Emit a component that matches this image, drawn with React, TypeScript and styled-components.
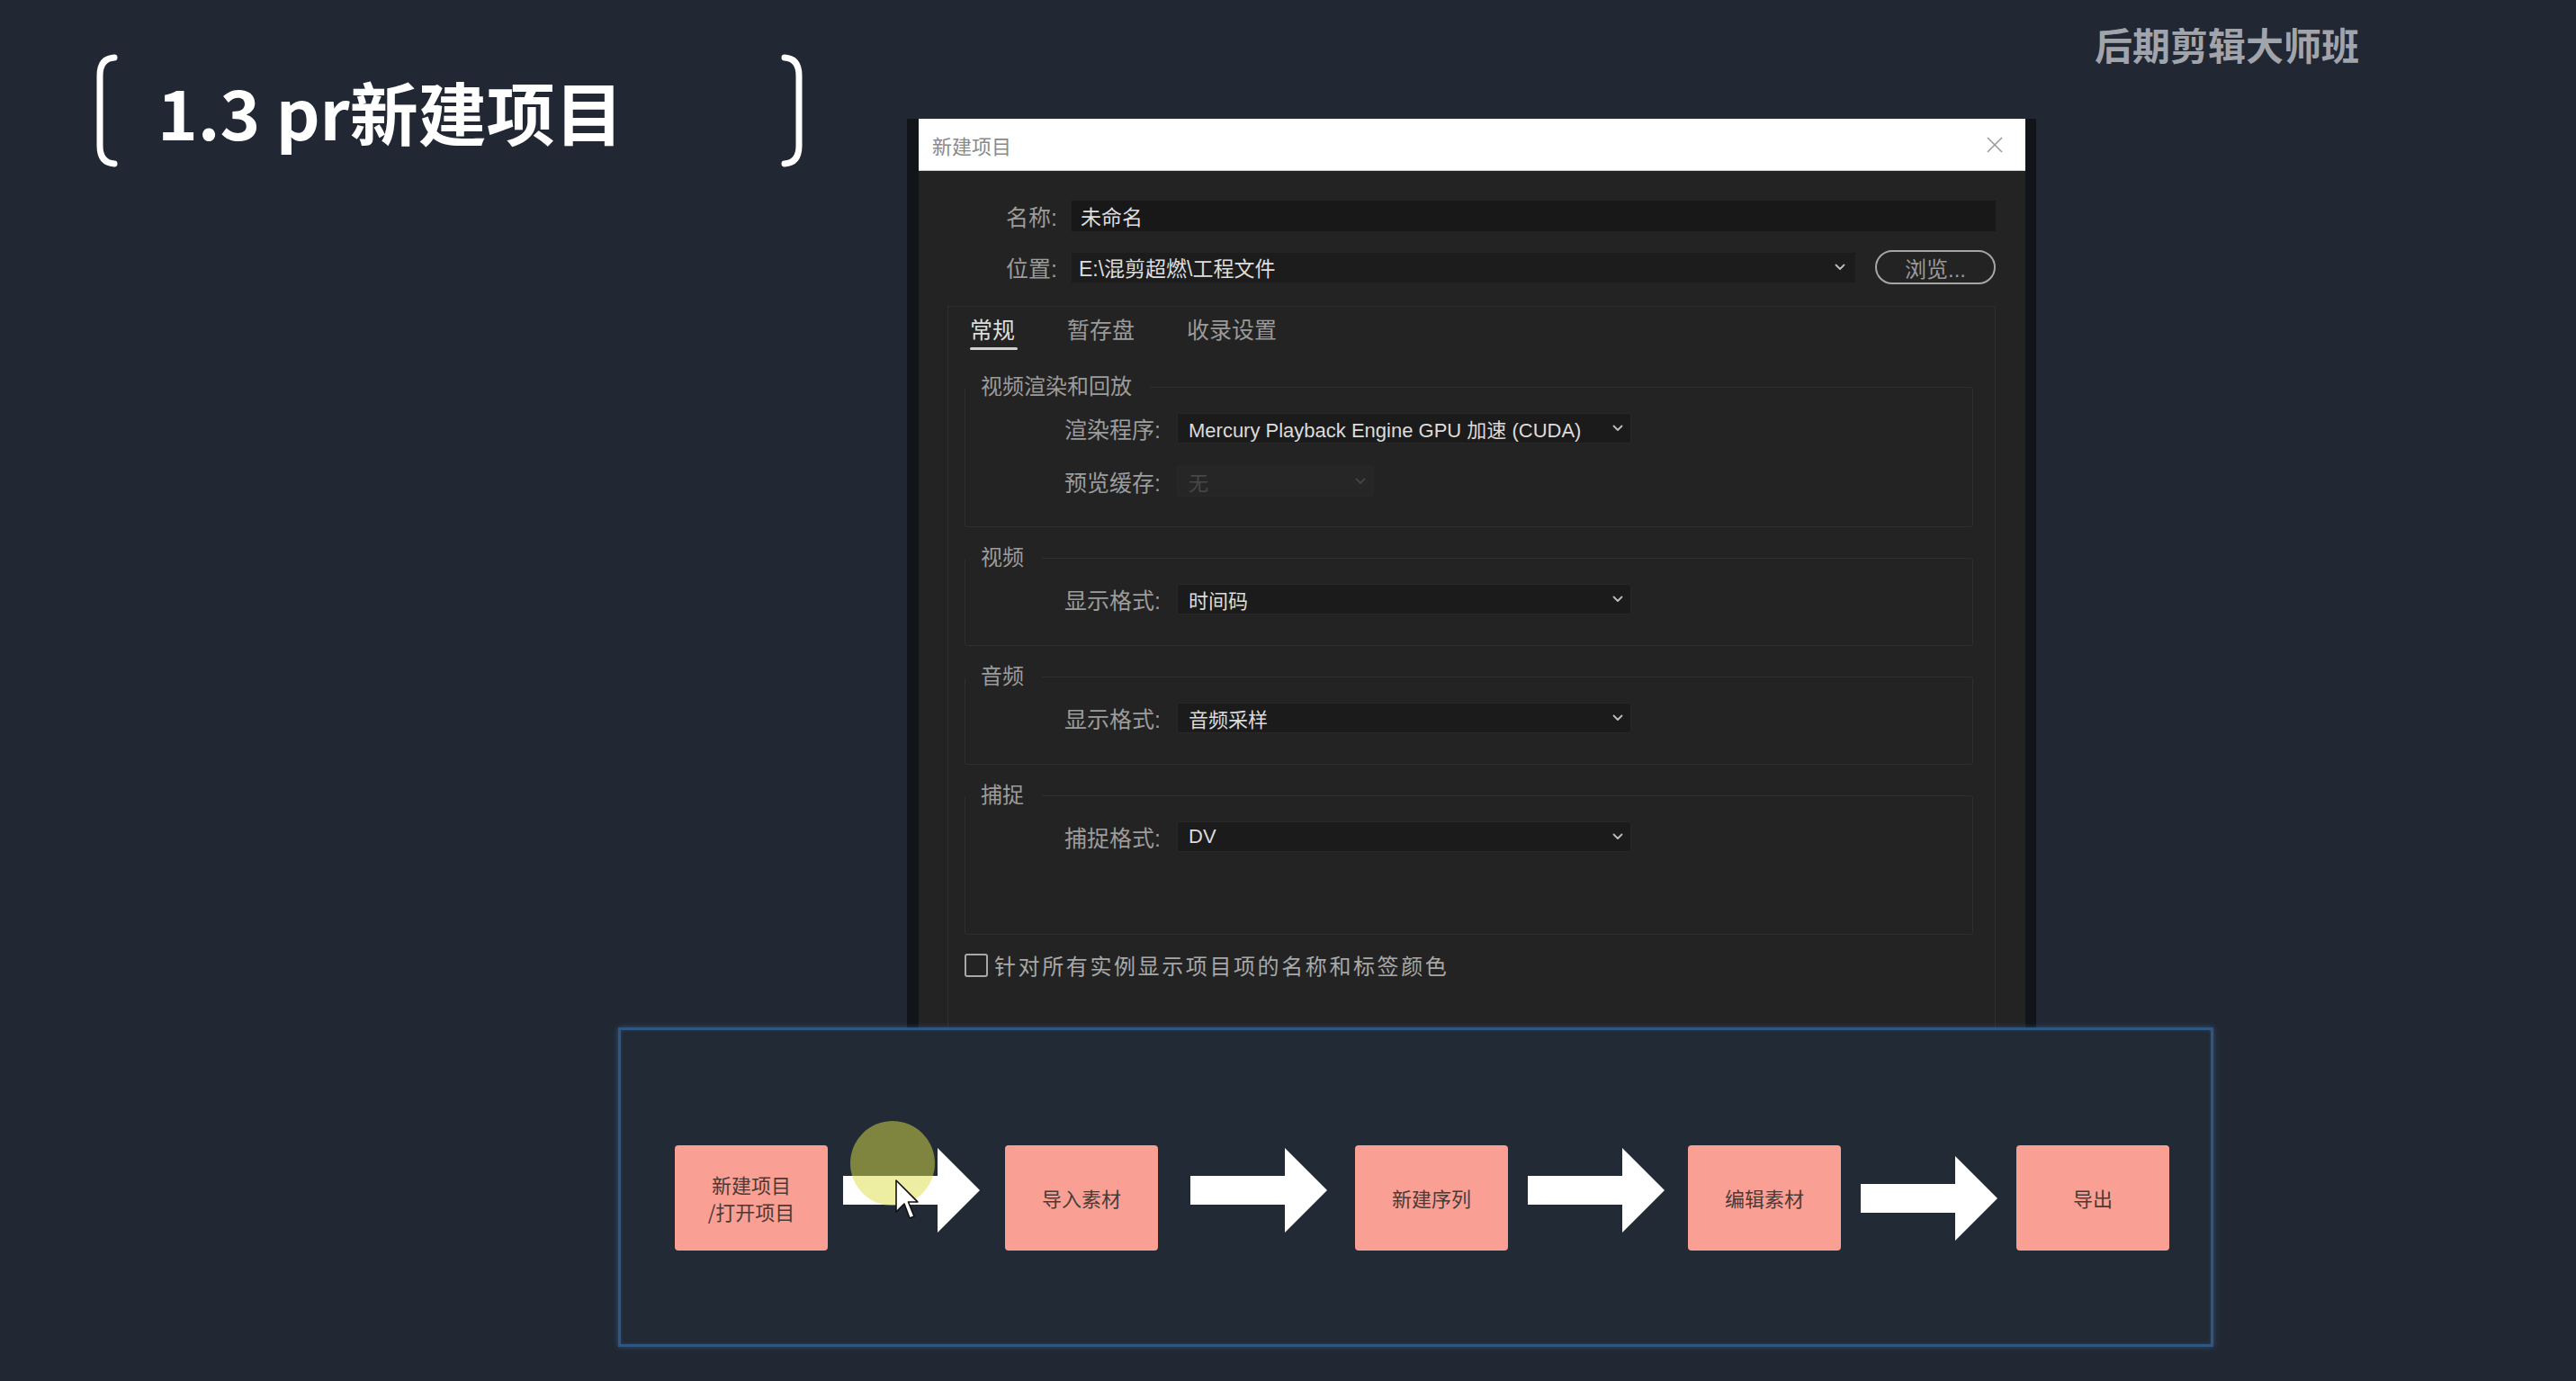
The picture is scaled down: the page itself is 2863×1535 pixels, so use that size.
import React from 'react';
import styled, { createGlobalStyle } from 'styled-components';

const GlobalStyle = createGlobalStyle`
  html, body { margin: 0; padding: 0; background: #212833; }
  body { font-family: "Liberation Sans", "Noto Sans CJK SC", sans-serif; }
  * { box-sizing: border-box; }
`;

const Page = styled.div`
  width: 2863px;
  height: 1535px;
  overflow: hidden;
  background: #212833;
  display: grid;
  grid-template-columns: 687px 321px 1255px 197px 1fr;
  grid-template-rows: 132px 1010px 355px 1fr;
`;

/* ---------- Slide title ---------- */
const TitleBlock = styled.div`
  grid-column: 1 / 3;
  grid-row: 1 / 3;
  align-self: start;
  justify-self: start;
  margin: 60px 0 0 106px;
  width: 787px;
  height: 126px;
  display: grid;
  grid-template-columns: 25px 1fr 25px;
  align-items: center;
`;

const TitleText = styled.h1`
  margin: 0;
  padding-left: 44px;
  font-family: "Noto Sans CJK SC", sans-serif;
  font-weight: 700;
  font-size: 76px;
  line-height: 1;
  color: #ffffff;
  white-space: nowrap;
`;

const BracketSvg = styled.svg`
  display: block;
  width: 25px;
  height: 126px;
`;

const Bracket = ({ flip }: { flip?: boolean }) => (
  <BracketSvg viewBox="0 0 25 126" style={flip ? { transform: 'scaleX(-1)' } : undefined}>
    <path
      d="M21 4 Q5 5 5 24 L5 102 Q5 121 21 122"
      fill="none"
      stroke="#ffffff"
      strokeWidth="7"
      strokeLinecap="round"
    />
  </BracketSvg>
);

const Watermark = styled.div`
  grid-column: 3 / 6;
  grid-row: 1;
  justify-self: end;
  align-self: start;
  margin: 28px 241px 0 0;
  font-family: "Noto Sans CJK SC", sans-serif;
  font-weight: 700;
  font-size: 42px;
  line-height: 1;
  color: #a1a5ab;
  white-space: nowrap;
`;

/* ---------- Dialog ---------- */
const Dialog = styled.section`
  grid-column: 3;
  grid-row: 2;
  display: flex;
  flex-direction: column;
  background: #111418;
  padding: 0 12px 0 13px;
  overflow: hidden;
`;

const TitleBar = styled.header`
  flex: none;
  height: 58px;
  background: #ffffff;
  border-bottom: 1px solid #cfcfcf;
  display: flex;
  align-items: center;
  justify-content: space-between;
  padding: 0 24px 0 15px;
`;

const DialogTitle = styled.span`
  font-family: "Noto Sans CJK SC", sans-serif;
  font-size: 22px;
  color: #8a8a8a;
`;

const CloseSvg = styled.svg`
  width: 20px;
  height: 20px;
  display: block;
`;

const DialogBody = styled.div`
  flex: 1;
  background: #232323;
  display: flex;
  flex-direction: column;
  min-height: 0;
`;

const TopForm = styled.div`
  display: grid;
  grid-template-columns: 154px 1fr;
  column-gap: 16px;
  row-gap: 20px;
  align-items: center;
  padding: 32px 33px 0 0;
`;

const FormLabel = styled.label`
  text-align: right;
  font-size: 25px;
  color: #9c9c9c;
  white-space: nowrap;
`;

const NameInput = styled.div`
  height: 34px;
  background: #181818;
  display: flex;
  align-items: center;
  padding: 0 10px;
  font-size: 23px;
  color: #dedede;
`;

const LocationRow = styled.div`
  display: flex;
  align-items: center;
  gap: 22px;
`;

const LocationSelect = styled.div`
  flex: 1;
  height: 33px;
  background: #1c1c1c;
  display: flex;
  align-items: center;
  justify-content: space-between;
  padding: 0 11px 0 8px;
  font-size: 23px;
  color: #dedede;
`;

const BrowseButton = styled.button`
  width: 134px;
  height: 38px;
  border: 2px solid #a6a6a6;
  border-radius: 19px;
  background: transparent;
  font-family: "Liberation Sans", "Noto Sans CJK SC", sans-serif;
  font-size: 24px;
  color: #9a9a9a;
  padding: 0;
`;

const TabPanel = styled.div`
  flex: 1;
  margin: 24px 33px 0 32px;
  border: 1px solid #2e2e2e;
  border-bottom: none;
  padding: 0 24px 0 18px;
`;

const TabBar = styled.div`
  display: flex;
  gap: 58px;
  padding: 11px 0 7px 6px;
`;

const Tab = styled.div<{ $active?: boolean }>`
  display: inline-flex;
  flex-direction: column;
  align-items: stretch;
  font-size: 25px;
  line-height: 30px;
  color: ${(p) => (p.$active ? '#dcdcdc' : '#9a9a9a')};
  &::after {
    content: '';
    display: block;
    height: 3px;
    margin: 4px -3px 0 0;
    border-radius: 2px;
    background: ${(p) => (p.$active ? '#d0d0d0' : 'transparent')};
  }
`;

const Group = styled.fieldset<{ $pb?: number; $mt?: number }>`
  margin: ${(p) => p.$mt ?? 19}px 0 0 0;
  border: 1px solid #2f2f2f;
  border-radius: 3px;
  padding: 13px 0 ${(p) => p.$pb ?? 33}px 0;
  min-width: 0;
`;

const Legend = styled.legend`
  padding: 0 20px 0 17px;
  font-size: 24px;
  line-height: 30px;
  color: #9c9c9c;
`;

const Rows = styled.div`
  display: flex;
  flex-direction: column;
  gap: 23px;
`;

const FieldRow = styled.div`
  display: grid;
  grid-template-columns: 217px auto;
  column-gap: 18px;
  align-items: center;
  justify-content: start;
`;

const Select = styled.div<{ $w: number; $disabled?: boolean }>`
  width: ${(p) => p.$w}px;
  height: 34px;
  background: ${(p) => (p.$disabled ? '#262626' : '#1b1b1b')};
  border: 1px solid #282828;
  border-radius: 2px;
  display: flex;
  align-items: center;
  justify-content: space-between;
  padding: 0 8px 0 12px;
  font-size: 22px;
  color: ${(p) => (p.$disabled ? '#474747' : '#dcdcdc')};
  white-space: nowrap;
`;

const ChevronSvg = styled.svg`
  width: 12px;
  height: 8px;
  display: block;
  flex: none;
`;

const Chevron = ({ color = '#bdbdbd' }: { color?: string }) => (
  <ChevronSvg viewBox="0 0 12 8">
    <polyline points="1.5,1.5 6,6 10.5,1.5" fill="none" stroke={color} strokeWidth="1.8" strokeLinecap="round" strokeLinejoin="round" />
  </ChevronSvg>
);

const CheckRow = styled.div`
  margin-top: 16px;
  display: flex;
  align-items: center;
  gap: 7px;
`;

const CheckBox = styled.span`
  width: 26px;
  height: 26px;
  border: 2px solid #a8a8a8;
  border-radius: 3px;
  flex: none;
`;

const CheckText = styled.span`
  font-size: 24px;
  letter-spacing: 2.6px;
  color: #a8a8a8;
  white-space: nowrap;
`;

/* ---------- Flow diagram ---------- */
const FlowPanel = styled.section`
  grid-column: 2 / 5;
  grid-row: 3;
  border: 3px solid #2e5681;
  box-shadow: 0 0 6px rgba(70, 130, 200, 0.45), inset 0 0 4px rgba(70, 130, 200, 0.25);
  background: #212a35;
  padding: 128px 0 0 60px;
`;

const FlowRow = styled.div`
  display: flex;
  align-items: center;
  height: 117px;
`;

const StepBox = styled.div`
  flex: none;
  width: 170px;
  height: 117px;
  background: #fa9f94;
  border-radius: 4px;
  display: flex;
  align-items: center;
  justify-content: center;
  text-align: center;
  font-family: "Noto Sans CJK SC", sans-serif;
  font-size: 22px;
  line-height: 1.35;
  color: #4c3a37;
`;

const ArrowWrap = styled.div<{ $ml: number; $mr: number; $lift: number }>`
  position: relative;
  flex: none;
  width: 152px;
  height: 94px;
  margin: 0 ${(p) => p.$mr}px ${(p) => p.$lift}px ${(p) => p.$ml}px;
`;

const ArrowSvg = styled.svg`
  display: block;
  width: 152px;
  height: 94px;
`;

const Highlight = styled.div`
  position: absolute;
  left: 8px;
  top: -30px;
  width: 94px;
  height: 94px;
  border-radius: 50%;
  background: rgba(222, 222, 72, 0.5);
`;

const CursorSvg = styled.svg`
  position: absolute;
  left: 58px;
  top: 35px;
  width: 27px;
  height: 45px;
`;

const Arrow = ({ ml, mr, lift, cursor }: { ml: number; mr: number; lift: number; cursor?: boolean }) => (
  <ArrowWrap $ml={ml} $mr={mr} $lift={lift}>
    <ArrowSvg viewBox="0 0 152 94">
      <polygon points="0,31 105,31 105,0 152,47 105,94 105,63 0,63" fill="#ffffff" />
    </ArrowSvg>
    {cursor && (
      <>
        <Highlight />
        <CursorSvg viewBox="-1 -1 27 45">
          <polygon
            points="0,0 0,35 9,26 15,42 20,40 13.5,24 24,24"
            fill="#ffffff"
            stroke="#111111"
            strokeWidth="1.6"
            strokeLinejoin="round"
          />
        </CursorSvg>
      </>
    )}
  </ArrowWrap>
);

export default function App() {
  return (
    <>
      <GlobalStyle />
      <Page>
        <TitleBlock>
          <Bracket />
          <TitleText>1.3 pr新建项目</TitleText>
          <Bracket flip />
        </TitleBlock>

        <Watermark>后期剪辑大师班</Watermark>

        <Dialog>
          <TitleBar>
            <DialogTitle>新建项目</DialogTitle>
            <CloseSvg viewBox="0 0 20 20">
              <line x1="2" y1="2" x2="18" y2="18" stroke="#9a9a9a" strokeWidth="1.6" />
              <line x1="18" y1="2" x2="2" y2="18" stroke="#9a9a9a" strokeWidth="1.6" />
            </CloseSvg>
          </TitleBar>
          <DialogBody>
            <TopForm>
              <FormLabel>名称:</FormLabel>
              <NameInput>未命名</NameInput>
              <FormLabel>位置:</FormLabel>
              <LocationRow>
                <LocationSelect>
                  <span>E:\混剪超燃\工程文件</span>
                  <Chevron />
                </LocationSelect>
                <BrowseButton>浏览...</BrowseButton>
              </LocationRow>
            </TopForm>

            <TabPanel>
              <TabBar>
                <Tab $active>常规</Tab>
                <Tab>暂存盘</Tab>
                <Tab>收录设置</Tab>
              </TabBar>

              <Group $mt={19} $pb={32}>
                <Legend>视频渲染和回放</Legend>
                <Rows>
                  <FieldRow>
                    <FormLabel>渲染程序:</FormLabel>
                    <Select $w={505}>
                      <span>Mercury Playback Engine GPU 加速 (CUDA)</span>
                      <Chevron />
                    </Select>
                  </FieldRow>
                  <FieldRow>
                    <FormLabel>预览缓存:</FormLabel>
                    <Select $w={219} $disabled>
                      <span>无</span>
                      <Chevron color="#444444" />
                    </Select>
                  </FieldRow>
                </Rows>
              </Group>

              <Group>
                <Legend>视频</Legend>
                <Rows>
                  <FieldRow>
                    <FormLabel>显示格式:</FormLabel>
                    <Select $w={505}>
                      <span>时间码</span>
                      <Chevron />
                    </Select>
                  </FieldRow>
                </Rows>
              </Group>

              <Group>
                <Legend>音频</Legend>
                <Rows>
                  <FieldRow>
                    <FormLabel>显示格式:</FormLabel>
                    <Select $w={505}>
                      <span>音频采样</span>
                      <Chevron />
                    </Select>
                  </FieldRow>
                </Rows>
              </Group>

              <Group $pb={90}>
                <Legend>捕捉</Legend>
                <Rows>
                  <FieldRow>
                    <FormLabel>捕捉格式:</FormLabel>
                    <Select $w={505}>
                      <span>DV</span>
                      <Chevron />
                    </Select>
                  </FieldRow>
                </Rows>
              </Group>

              <CheckRow>
                <CheckBox />
                <CheckText>针对所有实例显示项目项的名称和标签颜色</CheckText>
              </CheckRow>
            </TabPanel>
          </DialogBody>
        </Dialog>

        <FlowPanel>
          <FlowRow>
            <StepBox>
              新建项目
              <br />
              /打开项目
            </StepBox>
            <Arrow ml={17} mr={28} lift={17} cursor />
            <StepBox>导入素材</StepBox>
            <Arrow ml={36} mr={31} lift={17} />
            <StepBox>新建序列</StepBox>
            <Arrow ml={22} mr={26} lift={17} />
            <StepBox>编辑素材</StepBox>
            <Arrow ml={22} mr={21} lift={0} />
            <StepBox>导出</StepBox>
          </FlowRow>
        </FlowPanel>
      </Page>
    </>
  );
}
